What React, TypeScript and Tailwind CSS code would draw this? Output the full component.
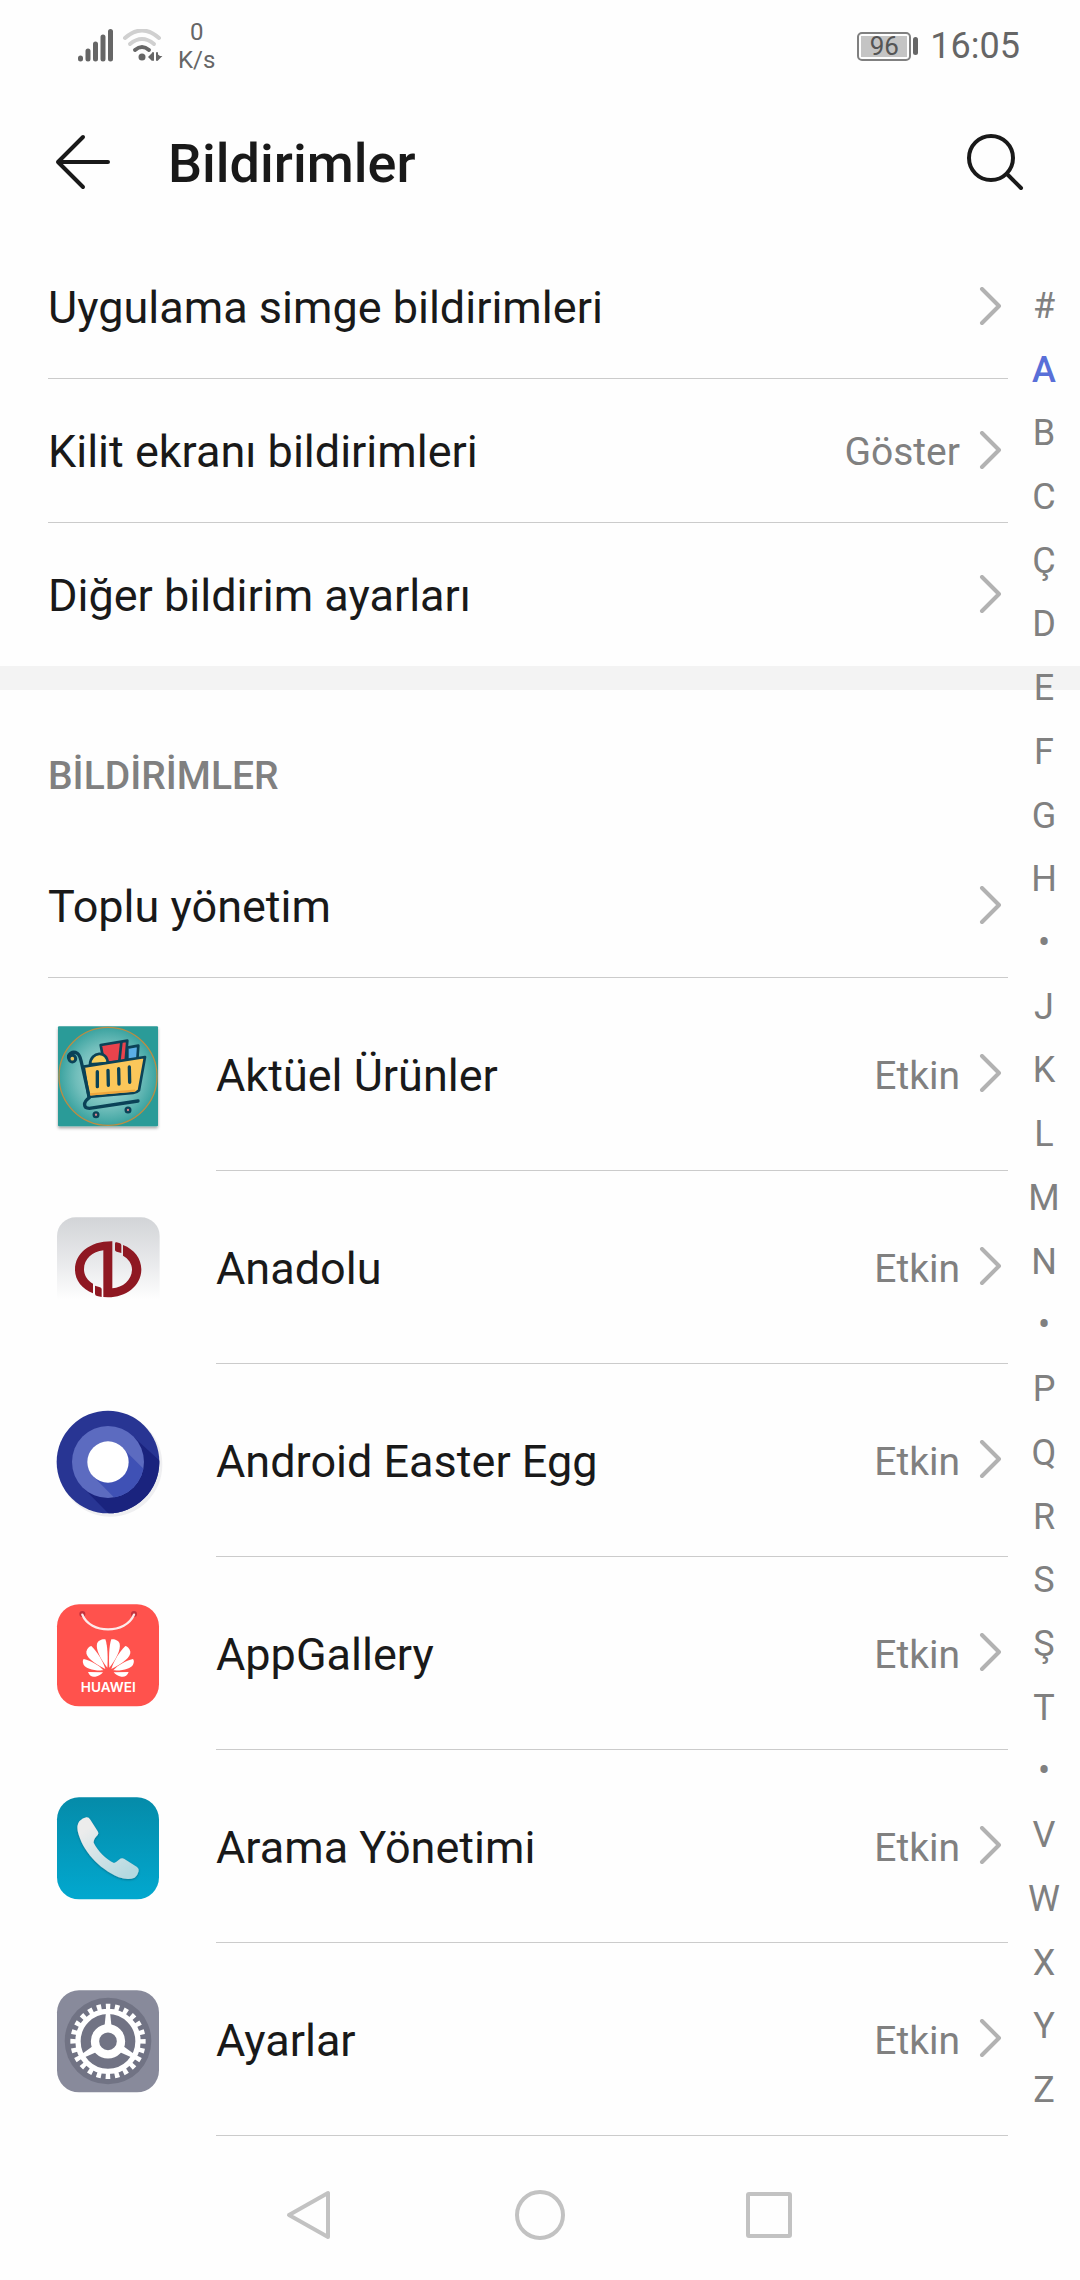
import type { ReactNode } from "react";
import clsx from "clsx";

type AppItem = {
  name: string;
  status: string;
  icon: ReactNode;
};

const INDEX_LETTERS = [
  "#", "A", "B", "C", "Ç", "D", "E", "F", "G", "H", "•", "J", "K", "L", "M",
  "N", "•", "P", "Q", "R", "S", "Ş", "T", "•", "V", "W", "X", "Y", "Z",
];

const Chevron = () => (
  <svg
    viewBox="0 0 24 40"
    className="h-10 w-6 shrink-0"
    fill="none"
    stroke="#b2b2b2"
    strokeWidth="4"
    strokeLinecap="round"
    strokeLinejoin="round"
    aria-hidden="true"
  >
    <path d="M4 2L21 19L4 36" />
  </svg>
);

const CartIcon = () => (
  <svg viewBox="24 14 360 360" className="size-[120px]" aria-hidden="true">
    <defs>
      <radialGradient id="cartBg" cx="0.5" cy="0.5" r="0.55">
        <stop offset="0" stopColor="#b9e3df" />
        <stop offset="0.6" stopColor="#6fbdba" />
        <stop offset="1" stopColor="#2b9b98" />
      </radialGradient>
      <filter id="cartShadow" x="-10%" y="-10%" width="120%" height="125%">
        <feDropShadow dx="0" dy="6" stdDeviation="4" floodOpacity="0.35" />
      </filter>
    </defs>
    <rect x="54" y="48" width="300" height="300" rx="3" fill="#2b9b98" filter="url(#cartShadow)" />
    <circle cx="204" cy="198" r="147" fill="url(#cartBg)" stroke="#b98d45" strokeWidth="4" />
    <g stroke="#0b4257" strokeWidth="8" strokeLinejoin="round" strokeLinecap="round">
      <path d="M262 112L295 106L292 148L262 150Z" fill="#5aaee6" />
      <path d="M182 104L262 91L257 152L192 158Z" fill="#e9434c" />
      <path d="M244 96L238 152" />
      <path d="M150 162C152 122 203 120 203 158Z" fill="#f8cf5d" />
      <path d="M131 169L315 140L297 240Q290 247 280 248L146 260Z" fill="#fbc75a" />
      <path
        d="M88 146C80 132 98 120 112 129C120 134 121 143 124 155L148 262M148 262C128 276 130 294 148 294L294 272"
        fill="none"
        strokeWidth="10"
      />
      <path d="M172 184L172 229M204 180L205 225M236 175L237 221M268 170L269 216" strokeWidth="10" />
    </g>
    <path d="M150 252L286 241" stroke="#f0a73d" strokeWidth="7" />
    <circle cx="97" cy="145" r="10" fill="#e9c45a" stroke="#0b4257" strokeWidth="9" />
    <circle cx="168" cy="313" r="7" fill="#d9818a" stroke="#0b4257" strokeWidth="7" />
    <circle cx="264" cy="299" r="7" fill="#d9818a" stroke="#0b4257" strokeWidth="7" />
  </svg>
);

const AnadoluIcon = () => (
  <svg viewBox="24 23 360 360" className="size-[120px]" aria-hidden="true">
    <defs>
      <linearGradient id="anadoluBg" x1="0" y1="0" x2="0" y2="1">
        <stop offset="0" stopColor="#d2d4d7" />
        <stop offset="0.45" stopColor="#e9eaec" />
        <stop offset="0.8" stopColor="#fefefe" />
      </linearGradient>
    </defs>
    <rect x="51" y="51" width="308" height="308" rx="56" fill="url(#anadoluBg)" />
    <g fill="#8f1822">
      <path d="M217 123L217 264C249 262 276 238 276 207C276 190 265 175 249 166L249 134C283 147 304 175 304 207C304 256 258 291 204 291L190 290L190 150C158 153 132 176 132 207C132 225 142 240 159 250L159 279C126 266 105 240 105 208C105 158 151 122 217 123Z" />
      <path d="M230 126L240 129Q244 131 244 135L244 158L230 154Q225 153 225 149L225 130Q225 125 230 126Z" />
      <path d="M165 256L180 261Q185 262 185 267L185 290L171 287Q165 285 165 280Z" />
    </g>
  </svg>
);

const EasterEggIcon = () => (
  <svg viewBox="24 17 360 360" className="size-[120px]" aria-hidden="true">
    <defs>
      <clipPath id="eggOuter">
        <circle cx="204" cy="200" r="154" />
      </clipPath>
      <clipPath id="eggInner">
        <circle cx="204" cy="200" r="108" />
      </clipPath>
    </defs>
    <circle cx="211" cy="208" r="156" fill="#efeff1" />
    <circle cx="204" cy="200" r="154" fill="#283593" />
    <path d="M280 124L400 234L400 400L250 400L128 276Z" fill="#1a237e" clipPath="url(#eggOuter)" />
    <circle cx="204" cy="200" r="108" fill="#5c6bc0" />
    <path d="M247 157L350 260L300 350L260 345L161 244Z" fill="#3f51b5" clipPath="url(#eggInner)" />
    <circle cx="204" cy="200" r="62" fill="#ffffff" />
  </svg>
);

const HuaweiPetals = () => (
  <>
    <path d="M202 232C182 206 167 178 171 160C174 150 187 145 196 147C203 165 204 205 202 232Z" />
    <path d="M196 236C160 217 137 200 139 184C141 174 148 168 154 167C171 184 188 210 196 236Z" />
    <path d="M190 240C160 242 137 234 131 223C127 215 128 209 131 206C153 212 177 224 190 240Z" />
    <path d="M189 246L144 245C149 257 157 261 166 259C176 257 184 252 189 246Z" />
  </>
);

const AppGalleryIcon = () => (
  <svg viewBox="24 11 360 360" className="size-[120px]" aria-hidden="true">
    <rect x="51" y="42" width="306" height="306" rx="66" fill="#ff524d" />
    <circle cx="127" cy="71" r="9" fill="#c4323c" />
    <circle cx="282" cy="71" r="9" fill="#c4323c" />
    <path d="M127 73C150 132 258 132 282 73" fill="none" stroke="#fdeaea" strokeWidth="7" strokeLinecap="round" />
    <g fill="#ffffff">
      <HuaweiPetals />
      <g transform="translate(410 0) scale(-1 1)">
        <HuaweiPetals />
      </g>
    </g>
    <text
      x="205"
      y="306"
      textAnchor="middle"
      fill="#ffffff"
      fontFamily="Inter, sans-serif"
      fontWeight="600"
      fontSize="41"
    >
      HUAWEI
    </text>
  </svg>
);

const CallIcon = () => (
  <svg viewBox="24 20 360 360" className="size-[120px]" aria-hidden="true">
    <defs>
      <linearGradient id="callBg" x1="0" y1="0" x2="0" y2="1">
        <stop offset="0" stopColor="#058ba9" />
        <stop offset="1" stopColor="#02a8cf" />
      </linearGradient>
      <linearGradient id="callHandset" x1="0" y1="0" x2="0.7" y2="1">
        <stop offset="0.2" stopColor="#ececec" />
        <stop offset="1" stopColor="#b5d9e0" />
      </linearGradient>
      <filter id="callShadow" x="-10%" y="-10%" width="120%" height="120%">
        <feDropShadow dx="0" dy="3" stdDeviation="3" floodColor="#04586e" floodOpacity="0.6" />
      </filter>
    </defs>
    <rect x="51" y="51" width="306" height="306" rx="66" fill="url(#callBg)" />
    <path
      d="M118 123Q128 112 139 111Q146 110 151 118L174 154Q177 159 173 164Q160 177 161 187C174 213 198 236 222 248Q229 245 237 238Q244 232 252 235L291 260Q298 265 296 273Q294 284 284 292Q265 301 236 291C176 264 127 212 113 152Q110 134 118 123Z"
      fill="url(#callHandset)"
      filter="url(#callShadow)"
    />
  </svg>
);

const SettingsIcon = () => (
  <svg viewBox="24 14 360 360" className="size-[120px]" aria-hidden="true">
    <rect x="51" y="45" width="306" height="306" rx="66" fill="#888a9b" />
    <circle cx="204" cy="197" r="130" fill="#717384" />
    <g transform="translate(204 198)" fill="none" stroke="#ffffff">
      <circle r="90" strokeWidth="16" />
      <circle
        r="104"
        strokeWidth="18"
        pathLength="48"
        strokeDasharray="1 1"
        strokeDashoffset="0.5"
        transform="rotate(-90)"
      />
      <circle r="39" strokeWidth="25" />
      <g fill="#ffffff" stroke="none">
        <path d="M-6 -88L6 -88L11 -40L-11 -40Z" />
        <path d="M-6 -88L6 -88L11 -40L-11 -40Z" transform="rotate(120)" />
        <path d="M-6 -88L6 -88L11 -40L-11 -40Z" transform="rotate(240)" />
      </g>
    </g>
  </svg>
);

const apps: AppItem[] = [
  { name: "Aktüel Ürünler", status: "Etkin", icon: <CartIcon /> },
  { name: "Anadolu", status: "Etkin", icon: <AnadoluIcon /> },
  { name: "Android Easter Egg", status: "Etkin", icon: <EasterEggIcon /> },
  { name: "AppGallery", status: "Etkin", icon: <AppGalleryIcon /> },
  { name: "Arama Yönetimi", status: "Etkin", icon: <CallIcon /> },
  { name: "Ayarlar", status: "Etkin", icon: <SettingsIcon /> },
];

const StatusBar = () => (
  <div className="flex h-[90px] items-center justify-between pl-[78px] pr-[60px] pt-0.5 text-[#666666]">
    <div className="flex items-center">
      <svg viewBox="0 0 36 34" className="h-[34px] w-9" stroke="#666666" strokeWidth="5" strokeLinecap="round" aria-hidden="true">
        <path d="M2.5 29V30M10 22V30M17.5 15V30M25 8V30M32.5 2.500V30" />
      </svg>
      <svg viewBox="0 0 42 34" className="ml-2 h-[34px] w-[42px]" fill="none" strokeLinecap="round" aria-hidden="true">
        <path d="M3 9Q20 -6 37 9" stroke="#d0d0d0" strokeWidth="4" />
        <path d="M8 15Q20 5 32 15" stroke="#d0d0d0" strokeWidth="4" />
        <path d="M13 21Q20 15 27 21" stroke="#666666" strokeWidth="4" />
        <circle cx="20" cy="28" r="3.500" fill="#666666" />
        <path d="M26 28L30 24V32ZM34 24L38 27H34Z" fill="#666666" />
        <path d="M31 24V31M35 24V31M35 28H38L35 31" stroke="#666666" strokeWidth="2" />
      </svg>
      <div className="ml-3.5 text-center text-[24px] leading-7">
        <div>0</div>
        <div>K/s</div>
      </div>
    </div>
    <div className="flex items-center">
      <div className="flex h-[29px] w-[54px] rounded-[5px] border-2 border-[#808080] p-0.5">
        <span className="flex flex-1 items-center justify-center bg-[#c4c4c4] text-[26px] leading-none text-[#555555]">
          96
        </span>
      </div>
      <div className="ml-0.5 h-[18px] w-[5px] rounded-full bg-[#666666]" />
      <time className="ml-3 text-[36px] leading-10">16:05</time>
    </div>
  </div>
);

const SettingRow = ({
  label,
  value,
  last,
}: {
  label: string;
  value?: string;
  last?: boolean;
}) => (
  <li className="pl-12 pr-[72px]">
    <button
      className={clsx(
        "flex w-full items-center text-left",
        last ? "h-[143px]" : "h-36 border-b border-[#cbcbcb]"
      )}
    >
      <span className="flex-1 pt-0.5 text-[45px] leading-[54px]">{label}</span>
      {value && <span className="mr-[18px] pt-0.5 text-[39px] leading-[48px] text-[#808080]">{value}</span>}
      <span className="pr-1.5">
        <Chevron />
      </span>
    </button>
  </li>
);

const AppRow = ({ name, status, icon }: AppItem) => (
  <li className="pl-12 pr-[72px]">
    <button className="flex h-[193px] w-full items-stretch text-left">
      <span className="mr-12 flex shrink-0 items-center">{icon}</span>
      <span className="flex flex-1 items-center border-b border-[#cbcbcb]">
        <span className="flex-1 pt-1 text-[45px] leading-[54px]">{name}</span>
        <span className="mr-[18px] pt-1 text-[39px] leading-[48px] text-[#808080]">{status}</span>
        <span className="pr-1.5">
          <Chevron />
        </span>
      </span>
    </button>
  </li>
);

export default function App() {
  return (
    <div className="flex min-h-screen flex-col bg-[#fefefe] font-[Roboto,sans-serif] text-[#191919]">
      <StatusBar />
      <header className="flex h-[145px] items-center pl-[54px] pr-14">
        <button aria-label="Geri">
          <svg viewBox="0 0 58 58" className="size-[58px]" fill="none" stroke="#191919" strokeWidth="4" strokeLinecap="round" strokeLinejoin="round">
            <path d="M29 3L4 28L29 53M4 28H54" />
          </svg>
        </button>
        <h1 className="ml-14 flex-1 pt-0.5 text-[54px] font-medium leading-16">Bildirimler</h1>
        <button aria-label="Ara">
          <svg viewBox="0 0 58 58" className="size-[58px]" fill="none" stroke="#191919" strokeWidth="4" strokeLinecap="round">
            <circle cx="25" cy="24" r="22" />
            <path d="M41 40L55 54" />
          </svg>
        </button>
      </header>

      <main className="relative">
        <ul>
          <SettingRow label="Uygulama simge bildirimleri" />
          <SettingRow label="Kilit ekranı bildirimleri" value="Göster" />
          <SettingRow label="Diğer bildirim ayarları" last />
        </ul>
        <div className="h-6 bg-[#f3f3f3]" />
        <section>
          <h2 className="flex h-36 items-center pl-12 pt-7 text-[39px] font-medium leading-[48px] text-[#808080]">
            BİLDİRİMLER
          </h2>
          <ul>
            <SettingRow label="Toplu yönetim" />
            {apps.map((app) => (
              <AppRow key={app.name} {...app} />
            ))}
          </ul>
        </section>

        {/* alphabet scroller floats over the list */}
        <nav aria-label="Alfabe" className="absolute bottom-3.5 right-0 top-[39px] flex w-[72px] flex-col">
          {INDEX_LETTERS.map((letter, i) => (
            <button
              key={i}
              className={clsx(
                "flex flex-1 items-center justify-center text-[36px] leading-10",
                letter === "A" ? "font-medium text-[#596fd8]" : "text-[#808080]"
              )}
            >
              {letter}
            </button>
          ))}
        </nav>
      </main>

      <nav aria-label="Sistem" className="flex h-36 items-center justify-center gap-[180px] pt-3.5">
        <button aria-label="Geri tuşu">
          <svg viewBox="0 0 50 50" className="size-[50px]" fill="none" stroke="#c2c2c2" strokeWidth="4" strokeLinejoin="round">
            <path d="M43 3V47L4 25Z" />
          </svg>
        </button>
        <button aria-label="Ana ekran">
          <svg viewBox="0 0 50 50" className="size-[50px]" fill="none" stroke="#c2c2c2" strokeWidth="4">
            <circle cx="25" cy="25" r="23" />
          </svg>
        </button>
        <button aria-label="Son uygulamalar">
          <svg viewBox="0 0 50 50" className="size-[50px]" fill="none" stroke="#c2c2c2" strokeWidth="4" strokeLinejoin="round">
            <rect x="3" y="4" width="42" height="42" rx="1" />
          </svg>
        </button>
      </nav>
    </div>
  );
}
